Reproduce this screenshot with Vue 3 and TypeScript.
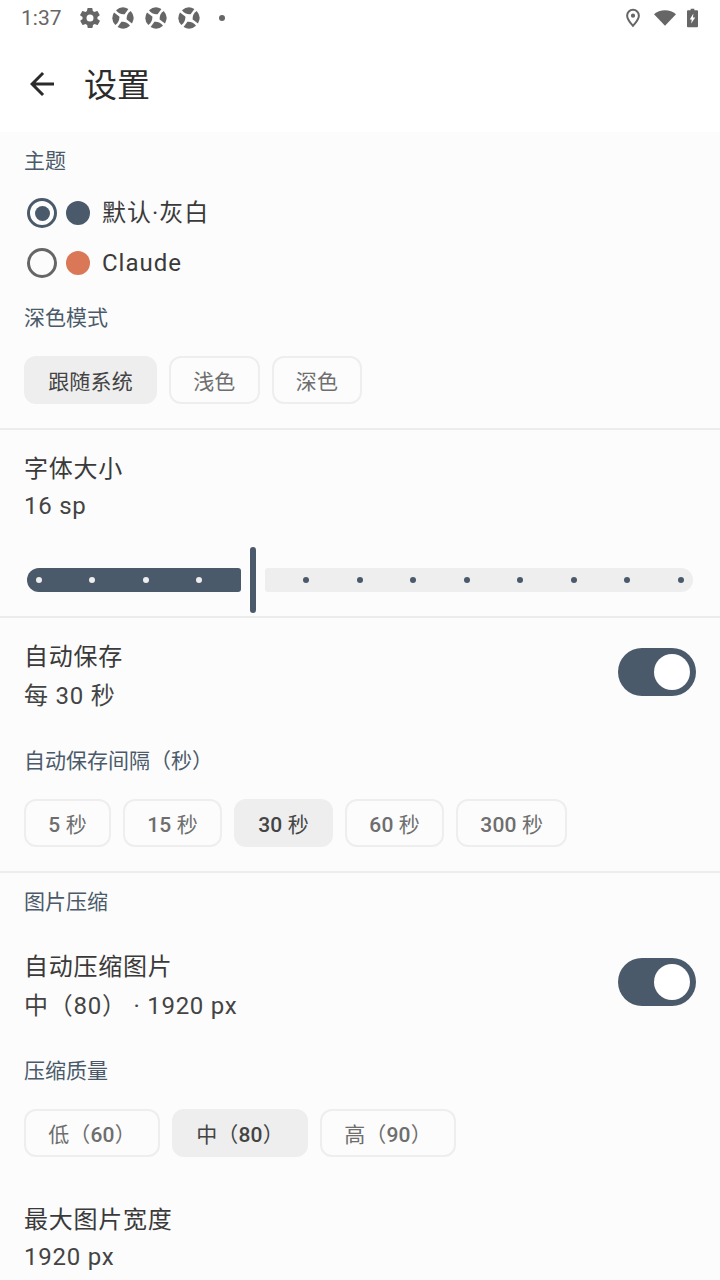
<template>
  <div class="page">
    <div class="status-bar">
      <span class="time">1:37</span>
      <svg class="st gear" viewBox="0 0 24 24"><path fill="#666" fill-rule="evenodd" d="M19.4 13c0-.3.1-.6.1-1s0-.7-.1-1l2.1-1.600c.2-.2.2-.4.100-.6l-2-3.500c-.1-.2-.4-.3-.6-.2l-2.500 1c-.5-.4-1.100-.7-1.700-1l-.4-2.700c0-.2-.2-.4-.5-.4h-4c-.2 0-.4.2-.5.400l-.4 2.700c-.6.2-1.100.6-1.700 1l-2.500-1c-.2-.1-.5 0-.6.2l-2 3.500c-.1.2-.1.4.1.6L4.600 11c0 .3-.1.6-.1 1s0 .7.1 1l-2.100 1.600c-.2.2-.2.4-.1.6l2 3.500c.1.2.4.3.6.2l2.500-1c.5.4 1.100.7 1.700 1l.4 2.700c0 .2.2.4.5.400h4c.2 0 .4-.2.5-.4l.4-2.700c.6-.2 1.100-.6 1.700-1l2.500 1c.2.1.5 0 .6-.2l2-3.500c.1-.2.1-.4-.1-.6zM12 15.500a3.500 3.500 0 1 1 0-7 3.500 3.500 0 0 1 0 7z"/></svg>
      <svg v-for="n in 3" :key="n" class="st orb" viewBox="0 0 24 24">
        <g fill="#666">
          <path v-for="r in [0, 90, 180, 270]" :key="r" :transform="`rotate(${r} 12 12)`" d="M5 4.300A10.500 10.500 0 0 1 17.400 3L13.600 8.300C10.500 8.700 7 7.500 5 4.300z"/>
        </g>
      </svg>
      <span class="dot"></span>
      <span class="grow"></span>
      <svg class="pin" viewBox="0 0 24 24"><path fill="#666" fill-rule="evenodd" d="M12 2a7.500 7.500 0 0 0-7.500 7.500c0 5 7.500 12.500 7.500 12.500s7.500-7.500 7.500-12.500A7.500 7.500 0 0 0 12 2zm0 2.200a5.300 5.300 0 0 1 5.300 5.300c0 2.800-3.400 7.200-5.300 9.300-1.900-2.100-5.300-6.500-5.300-9.300A5.300 5.300 0 0 1 12 4.200zm0 3a2.300 2.300 0 1 0 0 4.600 2.300 2.300 0 0 0 0-4.600z"/></svg>
      <svg class="wifi" viewBox="0.8 0 22.4 18"><path fill="#666" d="M12 17 .8 5.200C3.800 2.500 7.700 1 12 1s8.200 1.500 11.200 4.200z"/></svg>
      <svg class="batt" viewBox="0 0 12 20"><path fill="#666" fill-rule="evenodd" d="M4 0h4v1.500h3a1 1 0 0 1 1 1V19a1 1 0 0 1-1 1H1a1 1 0 0 1-1-1V2.500a1 1 0 0 1 1-1h3zM7 5 3 11.500h2.200L4.500 16 9 9.500H6.500z"/></svg>
    </div>

    <header class="app-bar">
      <svg class="back" viewBox="0 0 24 24"><path fill="#2b2b2b" d="M20 11H7.800l5.600-5.600L12 4l-8 8 8 8 1.400-1.400L7.800 13H20z"/></svg>
      <h1>设置</h1>
    </header>

    <main class="content">
      <section class="block first">
        <div class="label">主题</div>
        <div class="radio-row" v-for="t in themes" :key="t.name">
          <span class="radio" :class="{ on: t.on }"></span>
          <span class="swatch" :style="{ background: t.color }"></span>
          <span class="radio-text">{{ t.name }}</span>
        </div>
        <div class="label mode-label">深色模式</div>
        <div class="chips">
          <span v-for="c in modes" :key="c" class="chip" :class="{ sel: c === '跟随系统' }">{{ c }}</span>
        </div>
      </section>

      <section class="block font-block">
        <div class="title">字体大小</div>
        <div class="sub plain">16 sp</div>
        <div class="slider">
          <div class="track active">
            <i v-for="n in 4" :key="n" class="tick light"></i>
          </div>
          <div class="handle"></div>
          <div class="track rest">
            <i v-for="n in 8" :key="n" class="tick"></i>
          </div>
        </div>
      </section>

      <section class="block save-block">
        <div class="switch-row">
          <div>
            <div class="title">自动保存</div>
            <div class="sub">每 30 秒</div>
          </div>
          <span class="switch"><span class="thumb"></span></span>
        </div>
        <div class="label interval-label">自动保存间隔（秒）</div>
        <div class="chips">
          <span v-for="c in intervals" :key="c" class="chip" :class="{ sel: c === '30 秒' }">
            <span v-for="p in parts(c)" :key="p" :class="{ num: /\d/.test(p) }">{{ p }}</span>
          </span>
        </div>
      </section>

      <section class="block image-block">
        <div class="label">图片压缩</div>
        <div class="switch-row compress-row">
          <div>
            <div class="title">自动压缩图片</div>
            <div class="sub">中（80） · 1920 px</div>
          </div>
          <span class="switch"><span class="thumb"></span></span>
        </div>
        <div class="label interval-label">压缩质量</div>
        <div class="chips">
          <span v-for="c in qualities" :key="c" class="chip" :class="{ sel: c === '中（80）' }">
            <span v-for="p in parts(c)" :key="p" :class="{ num: /\d/.test(p) }">{{ p }}</span>
          </span>
        </div>
        <div class="title width-title">最大图片宽度</div>
        <div class="sub plain">1920 px</div>
      </section>
    </main>
  </div>
</template>

<script setup lang="ts">
const themes = [
  { name: '默认·灰白', color: '#4a5a6a', on: true },
  { name: 'Claude', color: '#da7756', on: false }
]
const modes = ['跟随系统', '浅色', '深色']
const intervals = ['5 秒', '15 秒', '30 秒', '60 秒', '300 秒']
const qualities = ['低（60）', '中（80）', '高（90）']

// digits are drawn heavier than the CJK part of the chip label
const parts = (text: string) => text.split(/(\d+)/).filter(Boolean)
</script>

<style>
body {
  background: #fcfcfc;
}
</style>

<style scoped>
.page {
  width: 720px;
  height: 1280px;
  overflow: hidden;
  background: #fcfcfc;
  font-family: Roboto, "Noto Sans CJK SC", sans-serif;
  color: #1f1f1f;
}

.status-bar {
  height: 36px;
  padding: 0 22px 0 21px;
  display: flex;
  align-items: center;
  background: #fff;
}

.time {
  font-size: 21px;
  color: #666;
  width: 57px;
}

.st {
  width: 24px;
  height: 24px;
  flex: none;
  margin-right: 9px;
}

.dot {
  width: 6px;
  height: 6px;
  margin-left: 9px;
  border-radius: 50%;
  background: #666;
}

.grow {
  flex: 1;
}

.pin {
  width: 22px;
  height: 22px;
  margin-right: 10px;
}

.wifi {
  width: 22px;
  height: 18px;
  margin-right: 11px;
}

.batt {
  width: 11px;
  height: 20px;
}

.app-bar {
  height: 96px;
  display: flex;
  align-items: center;
  padding-left: 24px;
  background: #fff;
}

.back {
  width: 36px;
  height: 36px;
  margin-right: 24px;
}

.app-bar h1 {
  margin: -2px 0 0;
  font-size: 33px;
  font-weight: 400;
  color: #2b2b2b;
}

.block {
  padding: 0 24px;
  border-bottom: 2px solid #ececec;
}

.first {
  padding-top: 15px;
  padding-bottom: 24px;
}

.label {
  font-size: 21px;
  line-height: 28px;
  color: #4a5a6a;
}

.radio-row {
  height: 50px;
  display: flex;
  align-items: center;
  padding-left: 3px;
}

.first .label:first-child {
  margin-bottom: 13px;
}

.radio {
  width: 30px;
  height: 30px;
  box-sizing: border-box;
  border: 3px solid #666;
  border-radius: 50%;
  display: flex;
  align-items: center;
  justify-content: center;
}

.radio.on {
  border-color: #4a5a6a;
}

.radio.on::after {
  content: '';
  width: 15px;
  height: 15px;
  border-radius: 50%;
  background: #4a5a6a;
}

.swatch {
  width: 24px;
  height: 24px;
  border-radius: 50%;
  margin-left: 9px;
}

.radio-text {
  margin-left: 12px;
  font-size: 24px;
  line-height: 32px;
  letter-spacing: 1px;
  color: #3a3a3a;
}

.mode-label {
  margin-top: 16px;
}

.chips {
  display: flex;
  gap: 12px;
  margin-top: 24px;
}

.chip {
  height: 48px;
  box-sizing: border-box;
  padding: 4px 22.2px 0;
  border-radius: 12px;
  border: 2px solid #eeeeee;
  display: flex;
  align-items: center;
  font-size: 21px;
  line-height: 28px;
  letter-spacing: 0.15px;
  color: #6e6e6e;
  white-space: pre;
}

.chip .num {
  font-weight: 500;
}

.chip.sel {
  background: #eeeeee;
  color: #444;
}

.font-block {
  padding-top: 20px;
  padding-bottom: 3px;
}

.title {
  font-size: 24px;
  line-height: 38px;
  letter-spacing: 0.75px;
  color: #3a3a3a;
}

.sub {
  font-size: 24px;
  line-height: 38px;
  letter-spacing: 0.75px;
  color: #444;
}

.sub.plain {
  margin-top: -1px;
}

.slider {
  margin-top: 22px;
  padding-left: 3px;
  height: 66px;
  display: flex;
  align-items: center;
}

.track {
  height: 24px;
  display: flex;
  align-items: center;
  justify-content: space-between;
  box-sizing: border-box;
}

.track.active {
  width: 214px;
  padding: 0 39px 0 9px;
  background: #4a5a6a;
  border-radius: 12px 3px 3px 12px;
}

.handle {
  width: 6px;
  height: 66px;
  margin: 0 9px;
  border-radius: 3px;
  background: #4a5a6a;
}

.track.rest {
  width: 428px;
  padding: 0 9px 0 38px;
  background: #eeeeee;
  border-radius: 3px 12px 12px 3px;
}

.tick {
  width: 6px;
  height: 6px;
  border-radius: 50%;
  background: #4a5a6a;
}

.tick.light {
  background: #eeeeee;
}

.save-block {
  padding-top: 20px;
  padding-bottom: 24px;
}

.switch-row {
  display: flex;
  align-items: flex-start;
  justify-content: space-between;
}

.switch-row .sub {
  margin-top: 1px;
}

.switch {
  width: 78px;
  height: 48px;
  margin-top: 10px;
  border-radius: 24px;
  background: #4a5a6a;
  display: flex;
  align-items: center;
  justify-content: flex-end;
  padding-right: 6px;
  box-sizing: border-box;
}

.thumb {
  width: 36px;
  height: 36px;
  border-radius: 50%;
  background: #fff;
}

.interval-label {
  margin-top: 32px;
}

.image-block {
  border-bottom: 0;
  padding-top: 15px;
}

.compress-row {
  margin-top: 32px;
}

.width-title {
  margin-top: 44px;
}
</style>
